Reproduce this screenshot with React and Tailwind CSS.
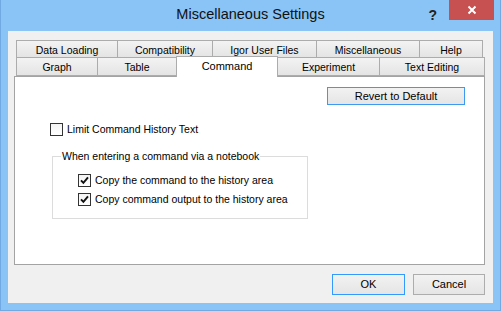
// Miscellaneous Settings dialog (Windows 8 style)
import React from 'react';

const font = "font-['Liberation_Sans',Arial,sans-serif]";

function Tab({ label, w, first, selected }) {
  if (selected) {
    return (
      <div className={`${w} -ml-px h-[21px] mb-[-1px] relative z-10 bg-white border-x border-t border-[#acacac] flex justify-center pt-[3px] text-[11px] leading-[13px] text-black`}>
        {label}
      </div>
    );
  }
  return (
    <div className={`${w} ${first ? '' : '-ml-px'} h-full border border-[#acacac] bg-linear-to-b from-[#f3f3f3] to-[#e4e4e4] flex items-center justify-center pt-[3px] text-[10.5px] text-black`}>
      {label}
    </div>
  );
}

function Check({ checked, label }) {
  return (
    <div className="flex items-center gap-[4px] h-[13px]">
      <div className="w-[13px] h-[13px] border border-[#333] bg-linear-to-b from-[#f4f4f4] to-white flex items-center justify-center">
        {checked && (
          <svg width="9" height="9" viewBox="0 0 9 9">
            <path d="M1 4.3 L3.4 6.9 L8 1.3" fill="none" stroke="#111" strokeWidth="1.9" />
          </svg>
        )}
      </div>
      <span className="text-[10.5px] leading-[13px] text-black">{label}</span>
    </div>
  );
}

export default function App() {
  return (
    <div className={`${font} w-[501px] h-[311px] bg-[#8ac3f5] border-x border-b border-[#71aae2] flex flex-col`}>
      {/* title bar */}
      <div className="h-[31px] grid grid-cols-[1fr_auto_1fr]">
        <div />
        <div className="self-center text-[14.5px] text-[#111] pb-[1px]">Miscellaneous Settings</div>
        <div className="flex justify-end items-start pr-[6px]">
          <span className="mt-[5px] mr-[12px] text-[14px] font-bold text-[#222]">?</span>
          <div className="w-[45px] h-[20px] bg-[#c75050] flex items-center justify-center">
            <svg width="10" height="10" viewBox="0 0 10 10">
              <path d="M1.5 1.5 L8.5 8.5 M8.5 1.5 L1.5 8.5" stroke="white" strokeWidth="2" />
            </svg>
          </div>
        </div>
      </div>

      {/* client area */}
      <div className="mx-[7px] h-[272px] bg-[#f0f0f0] flex flex-col pt-[9px] pl-[6px] pr-[8px]">
        <div className="ml-[2px] flex h-[18px]">
          <Tab first w="w-[102px]" label="Data Loading" />
          <Tab w="w-[96px]" label="Compatibility" />
          <Tab w="w-[105px]" label="Igor User Files" />
          <Tab w="w-[104px]" label="Miscellaneous" />
          <Tab w="w-[64px]" label="Help" />
        </div>
        <div className="ml-[2px] -mt-px flex items-end h-[19px]">
          <Tab first w="w-[82px]" label="Graph" />
          <Tab w="w-[80px]" label="Table" />
          <Tab selected w="w-[102px]" label="Command" />
          <Tab w="w-[103px]" label="Experiment" />
          <Tab w="w-[106px]" label="Text Editing" />
        </div>

        {/* panel */}
        <div className="h-[189px] bg-white border border-[#a3a3a3] flex flex-col pt-[10px]">
          <div className="flex justify-end pr-[19px]">
            <button className="w-[138px] h-[18px] border border-[#3c9af0] bg-linear-to-b from-[#f2f2f2] to-[#e5e5e5] text-[11px] leading-[14px] text-black">
              Revert to Default
            </button>
          </div>
          <div className="mt-[18px] pl-[35px]">
            <Check label="Limit Command History Text" />
          </div>
          <fieldset className="mt-[14px] ml-[37px] w-[256px] border border-[#dcdcdc] px-[8px] pb-[12px]">
            <legend className="px-[1px] text-[10.5px] leading-[13px] text-black">When entering a command via a notebook</legend>
            <div className="mt-[11px] ml-[17px] flex flex-col gap-[6px]">
              <Check checked label="Copy the command to the history area" />
              <Check checked label="Copy command output to the history area" />
            </div>
          </fieldset>
        </div>

        {/* dialog buttons */}
        <div className="mt-[9px] flex justify-end gap-[8px]">
          <button className="w-[73px] h-[21px] border border-[#3399ff] bg-linear-to-b from-[#f2f2f2] to-[#e5e5e5] text-[11px] text-black">
            OK
          </button>
          <button className="w-[72px] h-[21px] border border-[#adadad] bg-linear-to-b from-[#f2f2f2] to-[#e5e5e5] text-[11px] text-black">
            Cancel
          </button>
        </div>
      </div>
    </div>
  );
}
